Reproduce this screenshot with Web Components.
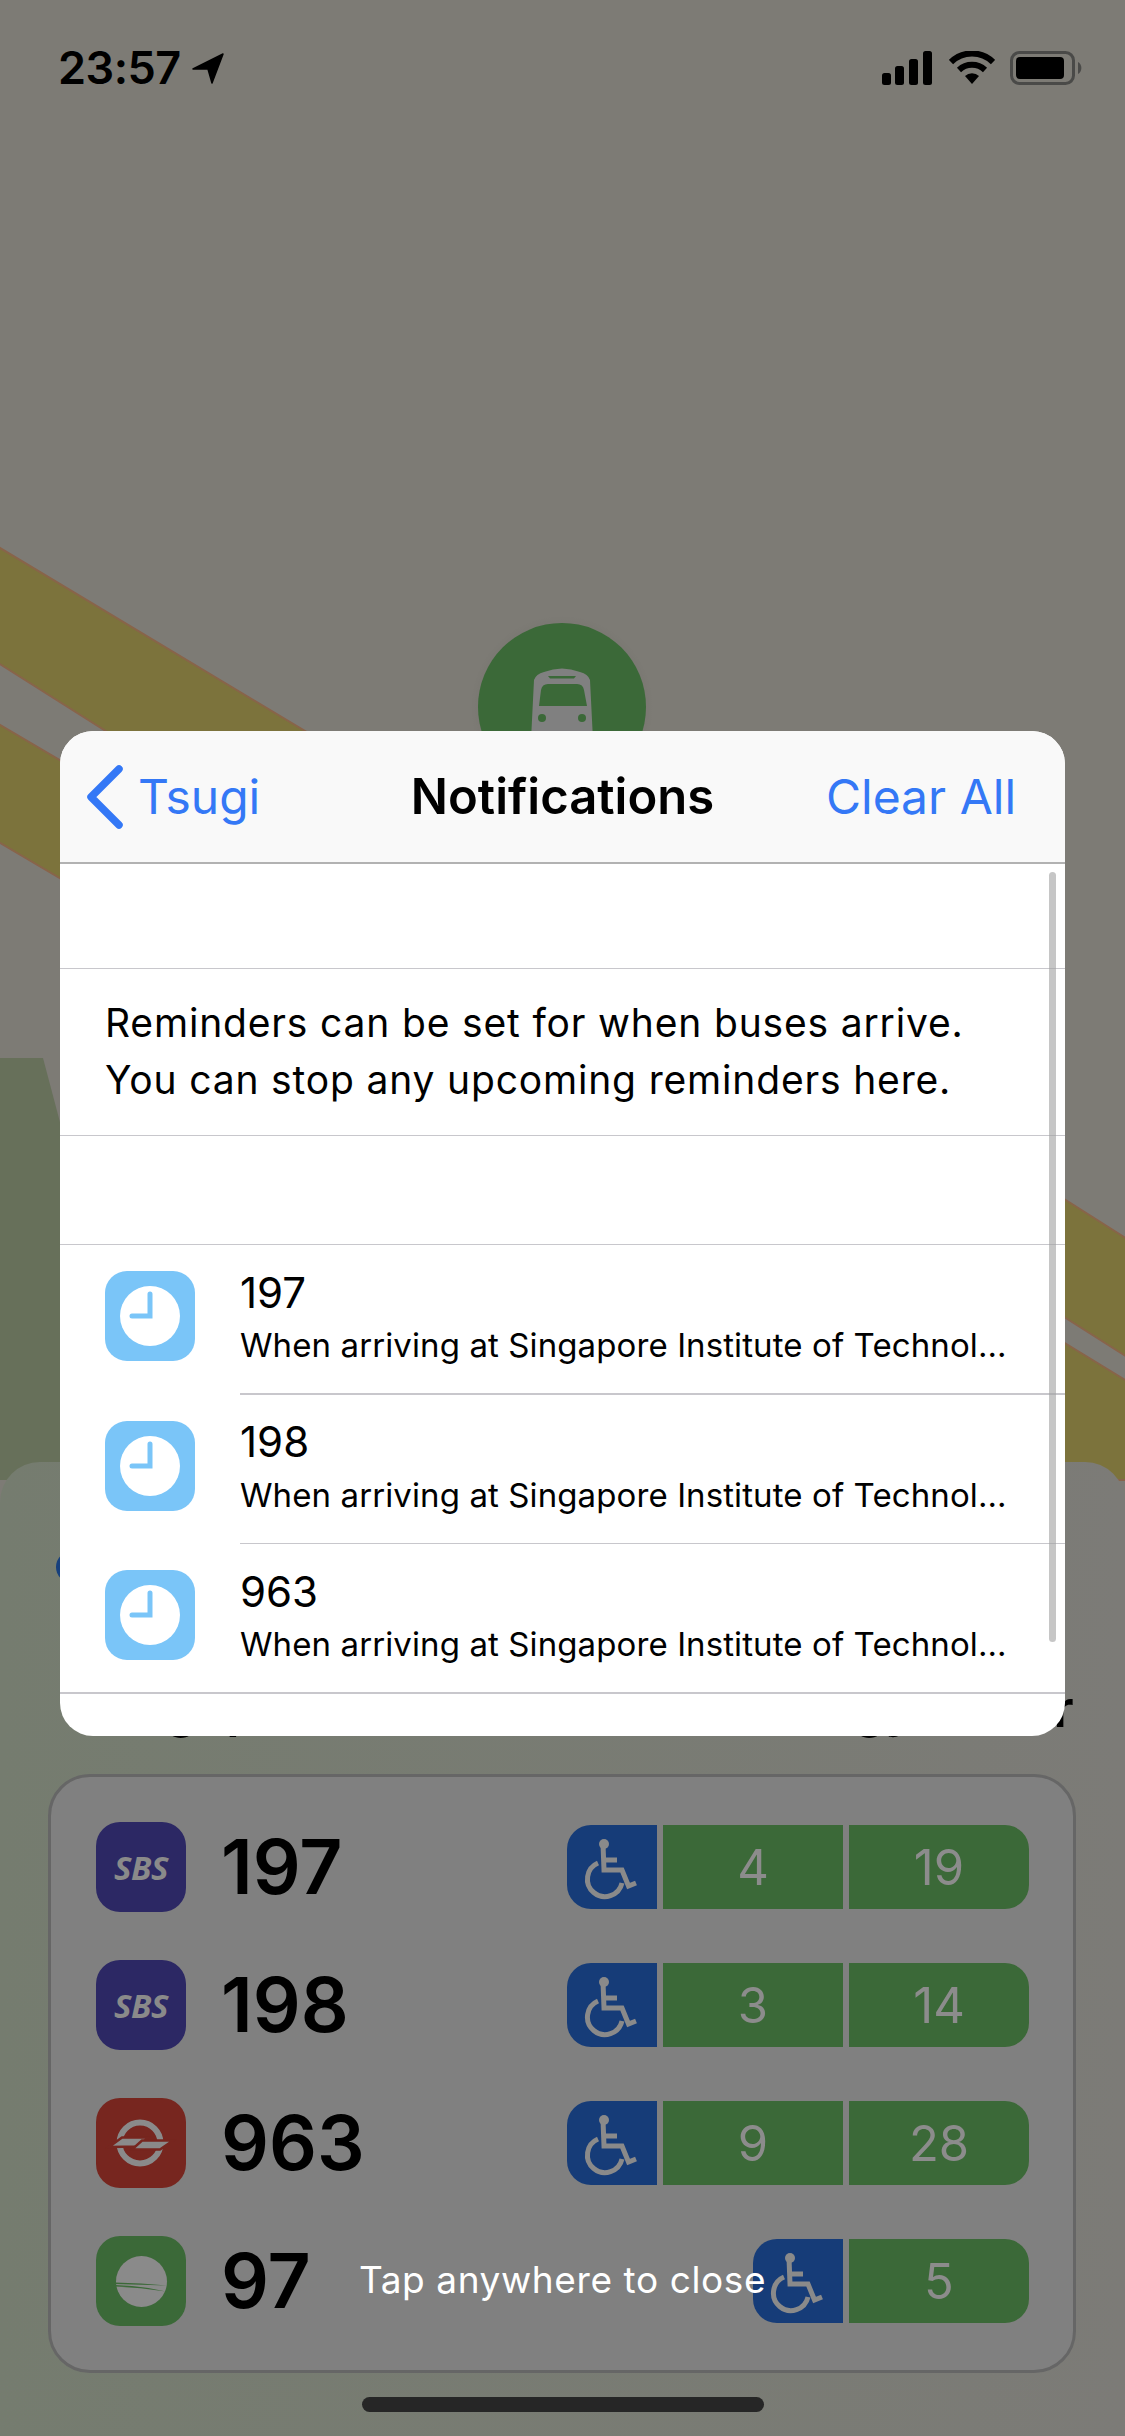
<!DOCTYPE html>
<html>
<head>
<meta charset="utf-8">
<title>Tsugi</title>
<style>
  html, body { margin: 0; padding: 0; background: #7d7b75; }
  body { width: 1125px; height: 2436px; overflow: hidden; font-family: Inter, "Liberation Sans", sans-serif; }
</style>
</head>
<body>
<tsugi-app>
  <status-bar slot="status" time="23:57"></status-bar>
  <map-canvas slot="map"></map-canvas>
  <stop-sheet slot="sheet" name="Singapore Institute of Technology Dover">
    <bus-row operator="sbs" service="197" first="4" second="19"></bus-row>
    <bus-row operator="sbs" service="198" first="3" second="14"></bus-row>
    <bus-row operator="smrt" service="963" first="9" second="28"></bus-row>
    <bus-row operator="tower" service="97" second="5"></bus-row>
  </stop-sheet>
  <notif-modal slot="modal">
    <notif-row service="197">When arriving at Singapore Institute of Technol…</notif-row>
    <notif-row service="198">When arriving at Singapore Institute of Technol…</notif-row>
    <notif-row service="963" last>When arriving at Singapore Institute of Technol…</notif-row>
  </notif-modal>
</tsugi-app>

<script>
"use strict";

(function () {
  class TsugiApp extends HTMLElement {
    constructor() {
      super();
      const shadow = this.attachShadow({ mode: "open" });
      shadow.innerHTML = `
        <style>
          :host{
            display:block;
            position:relative;
            width:1125px;
            height:2436px;
            overflow:hidden;
          }
          .close{
            position:absolute;
            left:0;
            right:0;
            top:2255px;
            text-align:center;
            color:#ffffff;
            font-size:37px;
            line-height:50px;
            letter-spacing:0.6px;
          }
          .home{
            position:absolute;
            left:362px;
            top:2397px;
            width:402px;
            height:15px;
            border-radius:8px;
            background:#262626;
          }
        </style>
        <slot name="map"></slot>
        <slot name="status"></slot>
        <slot name="sheet"></slot>
        <slot name="modal"></slot>
        <div class="close">Tap anywhere to close</div>
        <div class="home"></div>
      `;
    }
  }

  class StatusBar extends HTMLElement {
    constructor() {
      super();
      const shadow = this.attachShadow({ mode: "open" });
      shadow.innerHTML = `
        <style>
          :host{
            display:flex;
            position:relative;
            align-items:center;
            justify-content:space-between;
            height:36px;
            padding:50px 43px 0 58px;
            color:#000000;
          }
          .left, .right{ display:flex; align-items:center; }
          .time{
            font-size:45px;
            font-weight:600;
            line-height:36px;
            letter-spacing:-0.5px;
          }
          .arrow{ margin-left:11px; }
          .wifi{ margin-left:17px; }
          .battery{ margin-left:15px; }
        </style>
        <div class="left">
          <span class="time">${this.getAttribute("time")}</span>
          <svg class="arrow" width="32" height="32" viewBox="0 0 32 32">
            <path d="M1 17 L31 2 L20 31 L16 17 Z" fill="#000" stroke="#000" stroke-width="1.5" stroke-linejoin="round"/>
          </svg>
        </div>
        <div class="right">
          <svg width="50" height="34" viewBox="0 0 50 34">
            <rect x="0" y="22" width="9" height="12" rx="2.5" fill="#000"/>
            <rect x="13" y="15" width="9" height="19" rx="2.5" fill="#000"/>
            <rect x="27" y="8" width="9" height="26" rx="2.5" fill="#000"/>
            <rect x="41" y="0" width="9" height="34" rx="2.5" fill="#000"/>
          </svg>
          <svg class="wifi" width="46" height="34" viewBox="0 0 46 34">
            <path d="M2 11 A30 30 0 0 1 44 11" fill="none" stroke="#000" stroke-width="6" stroke-linecap="butt"/>
            <path d="M10 19 A19 19 0 0 1 36 19" fill="none" stroke="#000" stroke-width="6"/>
            <path d="M16 25 L23 33 L30 25 A10 10 0 0 0 16 25 Z" fill="#000"/>
          </svg>
          <svg class="battery" width="72" height="34" viewBox="0 0 72 34">
            <rect x="1.5" y="1.5" width="62" height="31" rx="8" fill="none" stroke="#4a4a48" stroke-width="3"/>
            <rect x="6" y="6" width="48" height="22" rx="4" fill="#000"/>
            <path d="M68 11 A7 7 0 0 1 68 23 Z" fill="#4a4a48"/>
          </svg>
        </div>
      `;
    }
  }

  // free canvas behind everything: roads, park and the stop pin
  class MapCanvas extends HTMLElement {
    constructor() {
      super();
      const shadow = this.attachShadow({ mode: "open" });
      shadow.innerHTML = `
        <style>
          :host{
            display:block;
            position:absolute;
            left:0;
            top:0;
            width:1125px;
            height:2436px;
          }
          svg{ display:block; }
        </style>
        <svg width="1125" height="2436" viewBox="0 0 1125 2436">
          <defs>
            <radialGradient id="pinShadow">
              <stop offset="0.8" stop-color="#000" stop-opacity="0.05"/>
              <stop offset="1" stop-color="#000" stop-opacity="0"/>
            </radialGradient>
          </defs>
          <rect width="1125" height="2436" fill="#7d7b75"/>
          <path d="M0 1058 H43 L70 1160 V1480 H0 Z" fill="#67705a"/>
          <g fill="#7c733c" stroke="#88644a" stroke-width="2">
            <path d="M-5 545 L320 740 L120 740 L-5 661 Z"/>
            <path d="M-5 722 L80 772 V890 L-5 840 Z"/>
            <path d="M1050 1190 L1135 1244 V1362 L1050 1308 Z"/>
            <path d="M1050 1334 L1135 1386 V1480 H1050 Z"/>
          </g>
          <circle cx="562" cy="707" r="92" fill="url(#pinShadow)"/>
          <circle cx="562" cy="707" r="84" fill="#3b6938"/>
          <path d="M531 740 L534 680 Q536 674 544 672 Q562 665 580 672 Q588 674 590 680 L593 740 Z" fill="#808080"/>
          <path d="M539 706 L541 690 Q542 684 548 684 H577 Q583 684 584 690 L587 706 Z" fill="#3b6938"/>
          <path d="M548 676 H576 L574 678.5 H550 Z" fill="#3b6938"/>
          <circle cx="542" cy="718" r="4" fill="#3b6938"/>
          <circle cx="582" cy="718" r="4" fill="#3b6938"/>
        </svg>
      `;
    }
  }

  class StopSheet extends HTMLElement {
    constructor() {
      super();
      const shadow = this.attachShadow({ mode: "open" });
      shadow.innerHTML = `
        <style>
          :host{
            display:block;
            position:absolute;
            left:0;
            right:0;
            top:1462px;
            bottom:0;
            box-sizing:border-box;
            padding:89px 49px 0 48px;
            border-radius:40px 40px 0 0;
            background:linear-gradient(90deg,#757c6f,#7c7b77);
          }
          .dot{
            width:32px;
            height:32px;
            margin-left:8px;
            border-radius:50%;
            background:#17407d;
          }
          h2{
            margin:96px 0 0 0;
            height:60px;
            font-size:50.75px;
            font-weight:600;
            line-height:60px;
            color:#000000;
            white-space:nowrap;
            padding-left:40px;
          }
          .card{
            margin-top:35px;
            box-sizing:border-box;
            width:1028px;
            height:599px;
            padding:45px 44px 45px 45px;
            border:3px solid #666666;
            border-radius:42px;
            background:#808080;
            display:flex;
            flex-direction:column;
          }
        </style>
        <div class="dot"></div>
        <h2>${this.getAttribute("name")}</h2>
        <div class="card"><slot></slot></div>
      `;
    }
  }

  class BusRow extends HTMLElement {
    constructor() {
      super();
      const shadow = this.attachShadow({ mode: "open" });
      const first = this.getAttribute("first");
      shadow.innerHTML = `
        <style>
          :host{
            display:flex;
            align-items:center;
            height:90px;
            margin-bottom:48px;
          }
          :host(:last-child){ margin-bottom:0; }
          .logo{
            flex:none;
            width:90px;
            height:90px;
            border-radius:24px;
            display:flex;
            align-items:center;
            justify-content:center;
          }
          .sbs{ background:#2c2864; }
          .smrt{ background:#77261f; }
          .tower{ background:#3b6938; }
          .brand{
            font-family:"Open Sans","Liberation Sans",sans-serif;
            font-size:33px;
            font-weight:700;
            font-style:italic;
            color:#8a8a8a;
            letter-spacing:-0.5px;
          }
          .service{
            margin-left:35px;
            font-size:75px;
            font-weight:600;
            line-height:90px;
            color:#000000;
          }
          .pills{
            margin-left:auto;
            display:flex;
            gap:6px;
            height:84px;
          }
          .pill{
            display:flex;
            align-items:center;
            justify-content:center;
            width:180px;
            background:#3b6938;
            color:#8c8c8c;
            font-size:49px;
          }
          .pill:last-child{ border-radius:0 24px 24px 0; }
          .chair{
            width:90px;
            background:#163c78;
            border-radius:24px 0 0 24px;
          }
          svg{ display:block; }
        </style>
        <div class="logo ${this.getAttribute("operator")}">${this.logo()}</div>
        <div class="service">${this.getAttribute("service")}</div>
        <div class="pills">
          <div class="pill chair">
            <svg width="90" height="84" viewBox="0 0 90 84">
              <circle cx="37" cy="19" r="5" fill="#8a8a8a"/>
              <path d="M36 19 L37 45 H55 L61.5 61 L69 58 M37 35 H50" fill="none" stroke="#8a8a8a" stroke-width="5"/>
              <path d="M31 38 A17.5 17.5 0 1 0 55 58" fill="none" stroke="#8a8a8a" stroke-width="5"/>
            </svg>
          </div>
          ${first ? `<div class="pill">${first}</div>` : ""}
          <div class="pill">${this.getAttribute("second")}</div>
        </div>
      `;
    }

    logo() {
      const kind = this.getAttribute("operator");
      if (kind === "sbs") {
        return `<span class="brand">SBS</span>`;
      }
      if (kind === "smrt") {
        return `<svg width="90" height="90" viewBox="0 0 90 90">
          <circle cx="44" cy="45" r="20.5" fill="none" stroke="#8a8a8a" stroke-width="6"/>
          <g fill="#8a8a8a" stroke="#77261f" stroke-width="2.5" stroke-linejoin="miter">
            <path d="M13 49 L26 39.5 H52 L43 48.5 Z"/>
            <path d="M77 42.5 L64 51.5 H36 L46 42.5 Z"/>
          </g>
        </svg>`;
      }
      return `<svg width="90" height="90" viewBox="0 0 90 90">
        <circle cx="45.5" cy="45.5" r="25.5" fill="#8a8a8a"/>
        <path d="M19 46.5 Q45 47 71 49.5 Q45 48.5 19 48 Z M19 49 Q45 49.5 70 55.5 Q45 51.5 19 50.5 Z" fill="#3b6938"/>
      </svg>`;
    }
  }

  class NotifModal extends HTMLElement {
    constructor() {
      super();
      const shadow = this.attachShadow({ mode: "open" });
      shadow.innerHTML = `
        <style>
          :host{
            display:block;
            position:absolute;
            left:60px;
            top:731px;
            width:1005px;
            height:1005px;
            border-radius:33px;
            overflow:hidden;
            background:#ffffff;
            color:#000000;
          }
          .nav{
            display:grid;
            grid-template-columns:1fr auto 1fr;
            align-items:center;
            box-sizing:border-box;
            height:133px;
            border-bottom:2px solid #b2b2b2;
            background:#f9f9f9;
            font-size:48px;
            color:#3478f6;
          }
          .back{ display:flex; align-items:center; gap:14px; padding-left:26px; }
          .back svg{ display:block; }
          .title{
            font-size:49px;
            font-weight:600;
            color:#000000;
          }
          .clear{ text-align:right; padding-right:49px; }
          .gap{
            box-sizing:border-box;
            height:105px;
            border-bottom:1.5px solid #c8c7cc;
          }
          .gap.tall{ height:109px; }
          .info{
            box-sizing:border-box;
            height:167px;
            padding:25px 45px 0 45px;
            border-bottom:1.5px solid #c8c7cc;
            font-size:39px;
            line-height:57px;
            letter-spacing:0.83px;
            white-space:nowrap;
          }
          .scroll{
            position:absolute;
            left:989px;
            top:141px;
            width:7px;
            height:770px;
            border-radius:4px;
            background:rgba(160,160,160,0.6);
          }
        </style>
        <div class="nav">
          <div class="back">
            <svg width="38" height="64" viewBox="0 0 38 64">
              <path d="M33 4 L5 32 L33 60" fill="none" stroke="#3478f6" stroke-width="7.5" stroke-linecap="round" stroke-linejoin="round"/>
            </svg>
            <span>Tsugi</span>
          </div>
          <div class="title">Notifications</div>
          <div class="clear">Clear All</div>
        </div>
        <div class="gap"></div>
        <div class="info">Reminders can be set for when buses arrive.<br>You can stop any upcoming reminders here.</div>
        <div class="gap tall"></div>
        <slot></slot>
        <div class="scroll"></div>
      `;
    }
  }

  class NotifRow extends HTMLElement {
    constructor() {
      super();
      const shadow = this.attachShadow({ mode: "open" });
      const last = this.hasAttribute("last");
      shadow.innerHTML = `
        <style>
          :host{
            display:block;
            position:relative;
            box-sizing:border-box;
            height:149.67px;
            padding:26px 0 0 45px;
          }
          .row{ display:flex; gap:45px; }
          .icon{
            flex:none;
            width:90px;
            height:90px;
            border-radius:22px;
            background:#7ac5f8;
          }
          .icon svg{ display:block; }
          .service{
            font-size:42px;
            line-height:48px;
            margin-top:-2.5px;
          }
          .sub{
            font-size:33px;
            line-height:48px;
            margin-top:4.5px;
            letter-spacing:0.1px;
            white-space:nowrap;
          }
          .line{
            position:absolute;
            left:${last ? 0 : 180}px;
            right:0;
            bottom:0;
            height:1.5px;
            background:#c8c7cc;
          }
        </style>
        <div class="row">
          <div class="icon">
            <svg width="90" height="90" viewBox="0 0 90 90">
              <circle cx="45" cy="45" r="30" fill="#ffffff"/>
              <path d="M45 23 V45 H27" fill="none" stroke="#7ac5f8" stroke-width="5" stroke-linecap="round"/>
            </svg>
          </div>
          <div>
            <div class="service">${this.getAttribute("service")}</div>
            <div class="sub"><slot></slot></div>
          </div>
        </div>
        <div class="line"></div>
      `;
    }
  }

  customElements.define("tsugi-app", TsugiApp);
  customElements.define("status-bar", StatusBar);
  customElements.define("map-canvas", MapCanvas);
  customElements.define("stop-sheet", StopSheet);
  customElements.define("bus-row", BusRow);
  customElements.define("notif-modal", NotifModal);
  customElements.define("notif-row", NotifRow);
})();
</script>
</body>
</html>
